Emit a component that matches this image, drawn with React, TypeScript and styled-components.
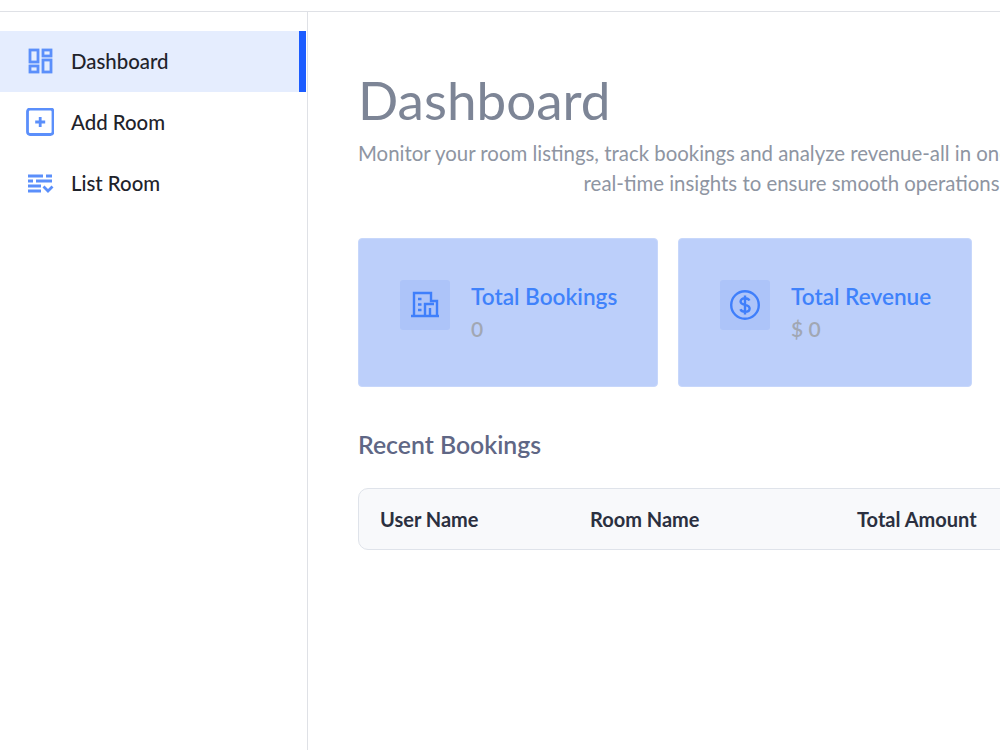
import styled, { createGlobalStyle } from "styled-components";

const GlobalStyle = createGlobalStyle`
  html, body {
    margin: 0;
    padding: 0;
    background: #fff;
    overflow: hidden;
  }
  body {
    font-family: "Lato", "Noto Sans", sans-serif;
  }
`;

const Page = styled.div`
  width: 1000px;
  height: 750px;
  display: flex;
  flex-direction: column;
  overflow: hidden;
`;

const TopBar = styled.div`
  height: 11px;
  flex-shrink: 0;
  border-bottom: 1px solid #dfe1e6;
`;

const Body = styled.div`
  flex: 1;
  display: flex;
  min-height: 0;
`;

const Sidebar = styled.nav`
  width: 308px;
  flex-shrink: 0;
  box-sizing: border-box;
  padding-top: 19px;
  border-right: 1px solid #dfe1e6;
  display: flex;
  flex-direction: column;
`;

const NavItem = styled.a<{ $active?: boolean }>`
  height: 61px;
  box-sizing: border-box;
  margin-right: 1px;
  display: flex;
  align-items: center;
  gap: 17px;
  padding: 0 0 2px 26px;
  font-size: 20.4px;
  font-weight: 500;
  color: #1f232b;
  background: ${(p) => (p.$active ? "#e5edfe" : "transparent")};
  border-right: 7px solid ${(p) => (p.$active ? "#1c5cff" : "transparent")};
`;

const NavIcon = styled.svg`
  width: 28px;
  height: 28px;
  flex-shrink: 0;
  fill: none;
  stroke: #5b8ffb;
  stroke-width: 2.8;
`;

const Main = styled.main`
  flex: 1;
  min-width: 0;
  padding: 58px 0 0 50px;
`;

const Title = styled.h1`
  margin: 0;
  font-size: 53px;
  line-height: 60px;
  font-weight: 400;
  color: #7d8596;
`;

const Subtitle = styled.p`
  width: 872px;
  margin: 8px 0 0;
  font-size: 20.4px;
  line-height: 30px;
  text-align: center;
  white-space: nowrap;
  color: #8e95a2;
`;

const Cards = styled.div`
  display: flex;
  gap: 20px;
  margin-top: 40px;
`;

const Card = styled.div<{ $width: number }>`
  width: ${(p) => p.$width}px;
  height: 149px;
  box-sizing: border-box;
  padding: 41px 0 0 41px;
  display: flex;
  gap: 21px;
  background: #bccffa;
  border: 1px solid #c7d7fb;
  border-radius: 4px;
`;

const CardIcon = styled.div`
  width: 50px;
  height: 50px;
  border-radius: 3px;
  background: #adc4f9;
  display: flex;
  align-items: center;
  justify-content: center;
  color: #3f7ffb;
`;

const CardTitle = styled.div`
  margin-top: 2px;
  font-size: 22.6px;
  line-height: 30px;
  font-weight: 600;
  color: #3f82fb;
`;

const CardValue = styled.div`
  margin-top: 3px;
  font-size: 21px;
  line-height: 28px;
  font-weight: 600;
  color: #a1a7b3;
`;

const SectionTitle = styled.h2`
  margin: 43px 0 0;
  font-size: 24.8px;
  line-height: 30px;
  font-weight: 600;
  color: #5f6785;
`;

const TableWrap = styled.div`
  width: 872px;
  height: 62px;
  box-sizing: border-box;
  margin-top: 28px;
  background: #f8f9fb;
  border: 1px solid #dfe3ea;
  border-radius: 10px;
`;

const Table = styled.table`
  border-collapse: collapse;
  table-layout: fixed;
  width: 100%;
  height: 100%;
`;

const Th = styled.th<{ $width: number }>`
  width: ${(p) => p.$width}px;
  padding: 0 0 0 21px;
  box-sizing: border-box;
  text-align: left;
  font-size: 20px;
  font-weight: 700;
  color: #2b3040;
`;

export default function App() {
  return (
    <Page>
      <GlobalStyle />
      <TopBar />
      <Body>
        <Sidebar>
          <NavItem $active>
            <NavIcon viewBox="0 0 28 28">
              <rect x="4" y="3" width="8" height="12" />
              <rect x="17" y="3" width="8" height="6" />
              <rect x="4" y="19" width="8" height="6" />
              <rect x="17" y="13" width="8" height="12" />
            </NavIcon>
            Dashboard
          </NavItem>
          <NavItem>
            <NavIcon viewBox="0 0 28 28">
              <rect x="1.5" y="1" width="25.5" height="25.5" rx="2.5" />
              <path d="M14.2 9v10M9.2 14h10" />
            </NavIcon>
            Add Room
          </NavItem>
          <NavItem>
            <NavIcon viewBox="0 0 28 28">
              <path d="M2 7h15M20 7h6M2 12h5M10 12h16M2 17h13M2 22h13M17.5 17.5l4.5 4.5 4.5-4.5" />
            </NavIcon>
            List Room
          </NavItem>
        </Sidebar>
        <Main>
          <Title>Dashboard</Title>
          <Subtitle>
            Monitor your room listings, track bookings and analyze revenue-all in one place. Stay updated with
            <br />
            real-time insights to ensure smooth operations.
          </Subtitle>
          <Cards>
            <Card $width={300}>
              <CardIcon>
                <svg width="30" height="30" viewBox="0 0 30 30" fill="none" stroke="currentColor" strokeWidth="2.4">
                  <path d="M1 26h28M4 26V3h17v8h6v15M15 26V14h9" />
                  <path d="M8 9h3.5M8 14.5h3.5M8 20h3.5M20 18v8" />
                </svg>
              </CardIcon>
              <div>
                <CardTitle>Total Bookings</CardTitle>
                <CardValue>0</CardValue>
              </div>
            </Card>
            <Card $width={294}>
              <CardIcon>
                <svg width="30" height="30" viewBox="0 0 30 30" fill="none" stroke="currentColor" strokeWidth="2.4">
                  <circle cx="15" cy="15" r="13.8" />
                  <path d="M19.5 10.5c-.8-1.5-2.4-2.3-4.5-2.3-2.6 0-4.4 1.3-4.4 3.3 0 4.7 9 2.2 9 7 0 2-1.9 3.3-4.6 3.3-2.2 0-3.9-.9-4.6-2.5M15 5.5v19" />
                </svg>
              </CardIcon>
              <div>
                <CardTitle>Total Revenue</CardTitle>
                <CardValue>$ 0</CardValue>
              </div>
            </Card>
          </Cards>
          <SectionTitle>Recent Bookings</SectionTitle>
          <TableWrap>
            <Table>
              <thead>
                <tr>
                  <Th $width={210}>User Name</Th>
                  <Th $width={267}>Room Name</Th>
                  <Th $width={395}>Total Amount</Th>
                </tr>
              </thead>
            </Table>
          </TableWrap>
        </Main>
      </Body>
    </Page>
  );
}
